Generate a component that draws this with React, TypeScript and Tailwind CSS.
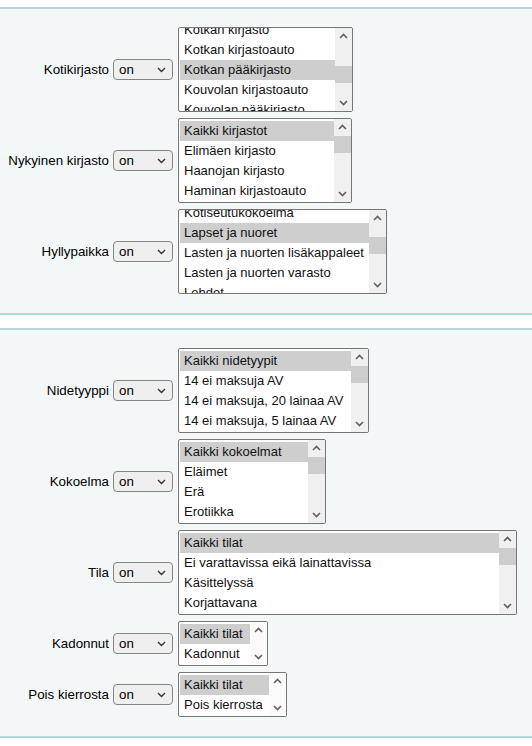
type ListDef = {
  label: string;
  width: number;
  items: string[];
  selected: number;
  offset?: number;
  thumbTop?: number;
  small?: boolean;
};

const firstPanel: ListDef[] = [
  {
    label: "Kotikirjasto",
    width: 175,
    items: ["Kotkan kirjasto", "Kotkan kirjastoauto", "Kotkan pääkirjasto", "Kouvolan kirjastoauto", "Kouvolan pääkirjasto"],
    selected: 2,
    offset: -10,
    thumbTop: 21,
  },
  {
    label: "Nykyinen kirjasto",
    width: 174,
    items: ["Kaikki kirjastot", "Elimäen kirjasto", "Haanojan kirjasto", "Haminan kirjastoauto"],
    selected: 0,
  },
  {
    label: "Hyllypaikka",
    width: 209,
    items: ["Kotiseutukokoelma", "Lapset ja nuoret", "Lasten ja nuorten lisäkappaleet", "Lasten ja nuorten varasto", "Lehdet"],
    selected: 1,
    offset: -9,
    thumbTop: 10,
  },
];

const secondPanel: ListDef[] = [
  {
    label: "Nidetyyppi",
    width: 191,
    items: ["Kaikki nidetyypit", "14 ei maksuja AV", "14 ei maksuja, 20 lainaa AV", "14 ei maksuja, 5 lainaa AV"],
    selected: 0,
  },
  {
    label: "Kokoelma",
    width: 148,
    items: ["Kaikki kokoelmat", "Eläimet", "Erä", "Erotiikka"],
    selected: 0,
  },
  {
    label: "Tila",
    width: 339,
    items: ["Kaikki tilat", "Ei varattavissa eikä lainattavissa", "Käsittelyssä", "Korjattavana"],
    selected: 0,
  },
  { label: "Kadonnut", width: 90, items: ["Kaikki tilat", "Kadonnut"], selected: 0, small: true },
  { label: "Pois kierrosta", width: 109, items: ["Kaikki tilat", "Pois kierrosta"], selected: 0, small: true },
];

function Chevron({ up }: { up?: boolean }) {
  return (
    <svg width="17" height="17" viewBox="0 0 17 17" className="block">
      <path
        d={up ? "M5 10 L8.5 6.5 L12 10" : "M5 7 L8.5 10.5 L12 7"}
        fill="none"
        stroke="#606060"
        strokeWidth="1.6"
      />
    </svg>
  );
}

function OnSelect() {
  return (
    <div className="flex items-center justify-between w-[60px] h-[21px] pl-[5px] pr-[6px] border border-[#858585] rounded-[4px] bg-[#efeff0] text-[13.33px] text-black">
      <span className="leading-none">on</span>
      <svg width="9" height="6" viewBox="0 0 9 6">
        <path d="M1 1 L4.5 4.5 L8 1" fill="none" stroke="#333" strokeWidth="1.4" />
      </svg>
    </div>
  );
}

function ListBox({ def }: { def: ListDef }) {
  const height = def.small ? 45 : 85;
  return (
    <div
      className="flex border border-[#767676] rounded-[2px] bg-white overflow-hidden"
      style={{ width: def.width, height }}
    >
      <div className="flex-1 overflow-hidden pt-[2px] pl-[1px]">
        <div style={{ marginTop: def.offset ?? 0 }}>
          {def.items.map((item, i) => (
            <div
              key={item}
              className={
                "h-[20px] pl-[4px] flex items-center whitespace-nowrap text-[13px] text-[#111] " +
                (i === def.selected ? "bg-[#cecece]" : "")
              }
            >
              {item}
            </div>
          ))}
        </div>
      </div>
      {def.small ? (
        <div className="w-[17px] flex flex-col justify-between bg-[#fafafa]">
          <Chevron up />
          <Chevron />
        </div>
      ) : (
        <div className="w-[17px] flex flex-col bg-[#f0f0f0]">
          <Chevron up />
          <div className="flex-1 relative">
            <div
              className="absolute left-0 right-0 h-[17px] bg-[#cdcdcd]"
              style={{ top: def.thumbTop ?? 0 }}
            />
          </div>
          <Chevron />
        </div>
      )}
    </div>
  );
}

function Panel({ rows }: { rows: ListDef[] }) {
  return (
    <div className="border-t-2 border-b-2 border-[#b6d6d7] bg-[#f4f7f8] pt-[18px] pb-[19px]">
      <div className="flex flex-col gap-[6px]">
        {rows.map((r) => (
          <div key={r.label} className="flex items-center">
            <div className="w-[109px] text-right text-[13.33px] text-black whitespace-nowrap">{r.label}</div>
            <div className="ml-[4px] mr-[5px]">
              <OnSelect />
            </div>
            <ListBox def={r} />
          </div>
        ))}
      </div>
    </div>
  );
}

export default function App() {
  return (
    <div className="w-[532px] h-[746px] bg-white pt-[7px] font-['Liberation_Sans',Arial,sans-serif] overflow-hidden">
      <Panel rows={firstPanel} />
      <div className="h-[13px]" />
      <Panel rows={secondPanel} />
    </div>
  );
}
